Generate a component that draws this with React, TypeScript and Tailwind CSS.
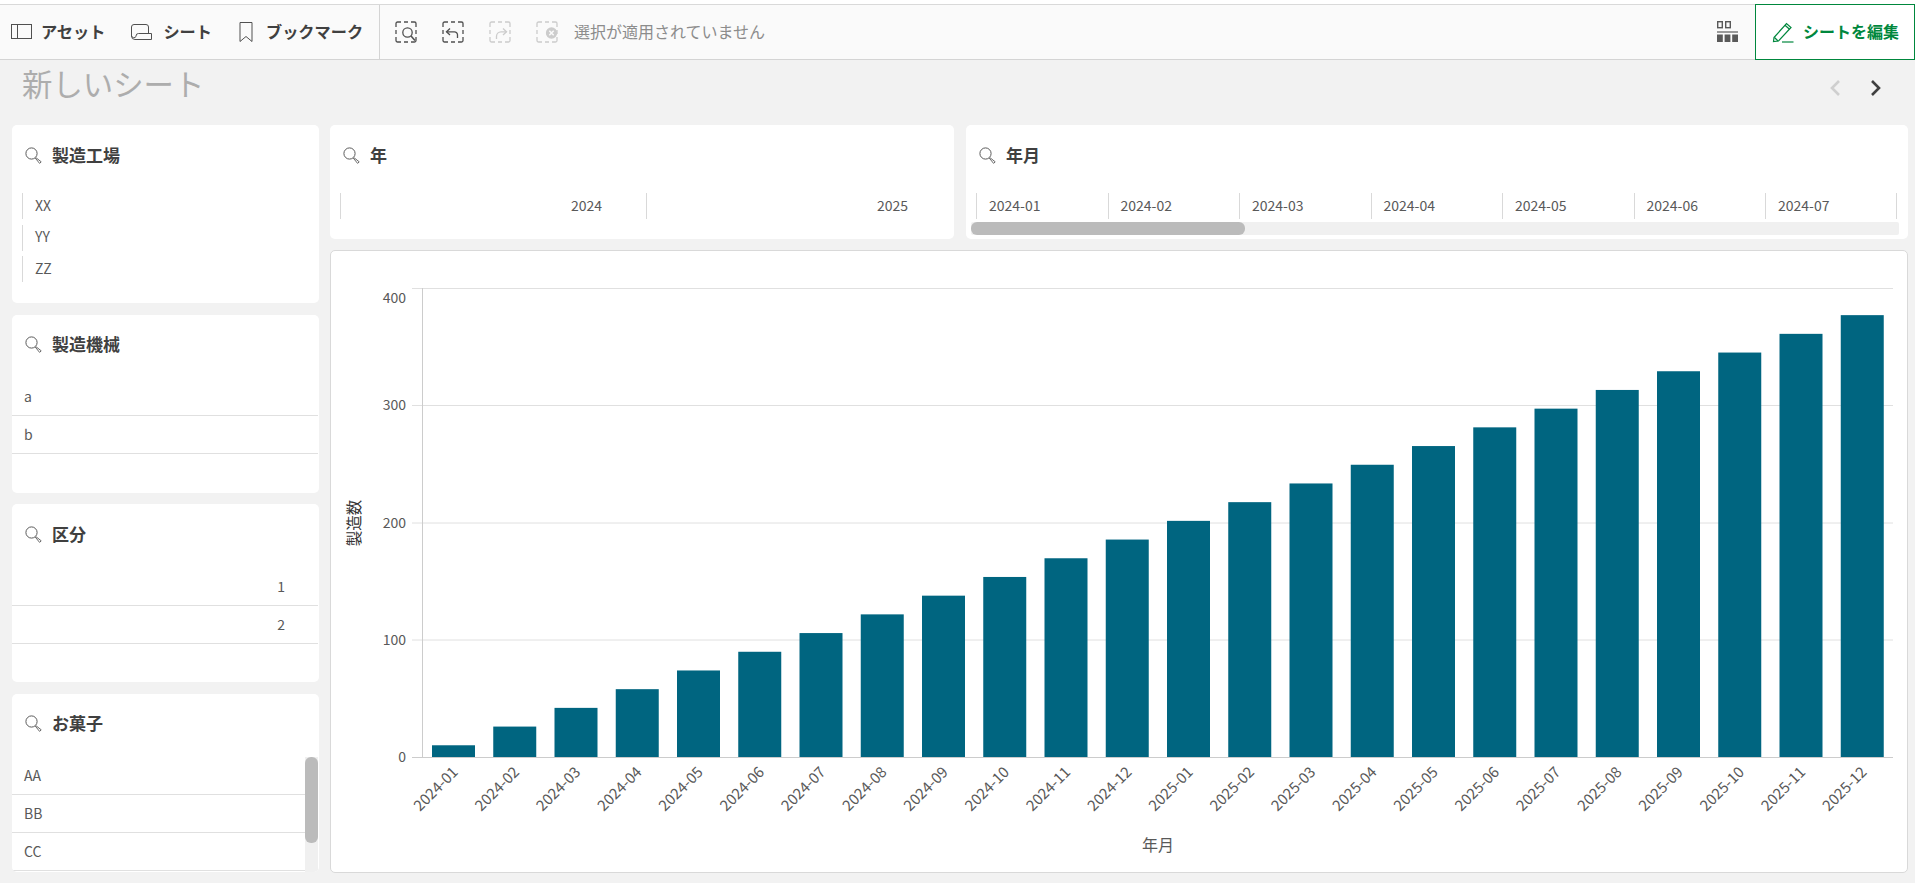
const FONT = "font-['Noto_Sans_CJK_JP','Noto_Sans',sans-serif]";

function SearchIcon() {
  return (
    <svg width="17" height="17" viewBox="0 0 17 17" fill="none" className="shrink-0">
      <circle cx="6.5" cy="6.5" r="5.6" stroke="#5a5a5a" strokeWidth="1" />
      <path d="M10.6 10.4 L16.2 14.8 L14.6 16.4 L10.2 11" stroke="#6a6a6a" strokeWidth="1" fill="#fff" />
    </svg>
  );
}

function Title({ text }: { text: string }) {
  return (
    <div className="flex items-center h-[60px] pl-[13px] shrink-0">
      <SearchIcon />
      <span className="ml-[10px] mb-[2px] text-[17px] font-bold text-[#404040] leading-none">{text}</span>
    </div>
  );
}

function Card({ children }: { children: React.ReactNode }) {
  return <div className="bg-white rounded-[5px] overflow-hidden flex flex-col min-h-0">{children}</div>;
}

function Row({ text, right }: { text: string; right?: boolean }) {
  return (
    <div
      className={`h-[38px] shrink-0 border-b border-[#e0e0e0] flex items-center text-[14px] text-[#595959] ${
        right ? "justify-end pr-[33px]" : "pl-[12px]"
      }`}
    >
      {text}
    </div>
  );
}

const months = [
  "2024-01","2024-02","2024-03","2024-04","2024-05","2024-06","2024-07","2024-08","2024-09","2024-10","2024-11","2024-12",
  "2025-01","2025-02","2025-03","2025-04","2025-05","2025-06","2025-07","2025-08","2025-09","2025-10","2025-11","2025-12",
];

function Chart() {
  const base = 757;
  const k = 469 / 400;
  return (
    <svg viewBox="331 251 1576 621" className="block w-full h-full" fontFamily="'Noto Sans CJK JP','Noto Sans',sans-serif">
      {[288.5, 405.5, 523, 640].map((y) => (
        <line key={y} x1="412" x2="1893" y1={y} y2={y} stroke="#e0e0e0" strokeWidth="1" />
      ))}
      <line x1="412" x2="1893" y1={base + 0.5} y2={base + 0.5} stroke="#cccccc" strokeWidth="1" />
      <line x1="422.5" x2="422.5" y1="288" y2={base} stroke="#cccccc" strokeWidth="1" />
      {months.map((m, i) => {
        const v = 10 + 15.95 * i;
        const x = 432 + 61.25 * i;
        const h = v * k;
        return <rect key={m} x={x} y={base - h} width="43" height={h} fill="#006580" />;
      })}
      {[
        ["400", 298],
        ["300", 405],
        ["200", 523],
        ["100", 640],
        ["0", 757],
      ].map(([t, y]) => (
        <text key={t} x="406" y={y} dy="0.36em" textAnchor="end" fontSize="14" fill="#595959">
          {t}
        </text>
      ))}
      {months.map((m, i) => {
        const cx = 459 + 61.25 * i;
        return (
          <text key={m} x={cx} y="773" textAnchor="end" fontSize="15" fill="#595959" transform={`rotate(-45 ${cx} 773)`}>
            {m}
          </text>
        );
      })}
      <text x="1158" y="851" textAnchor="middle" fontSize="16" fill="#595959">
        年月
      </text>
      <text x="0" y="0" textAnchor="middle" fontSize="15.5" fill="#333333" transform="translate(360 523) rotate(-90)">
        製造数
      </text>
    </svg>
  );
}

function ToolButton({ icon, label, className }: { icon: React.ReactNode; label: string; className: string }) {
  return (
    <div className={`flex items-center ${className}`}>
      {icon}
      <span className="mb-[2px] text-[16.2px] font-bold text-[#404040] leading-none">{label}</span>
    </div>
  );
}

function DashBox({ children, faded }: { children: React.ReactNode; faded?: boolean }) {
  return (
    <svg width="22" height="22" viewBox="0 0 22 22" fill="none" className="shrink-0">
      <g stroke={faded ? "#cccccc" : "#505050"} strokeWidth="1.3">
        <path d="M1 6V2.5A1.5 1.5 0 0 1 2.5 1H6M9 1h4M16 1h3.5A1.5 1.5 0 0 1 21 2.5V6M21 9v4M21 16v3.5a1.5 1.5 0 0 1-1.5 1.5H16M13 21H9M6 21H2.5A1.5 1.5 0 0 1 1 19.5V16M1 13V9" />
        {children}
      </g>
    </svg>
  );
}

export default function App() {
  return (
    <div className={`${FONT} w-[1915px] h-[883px] overflow-hidden bg-[#f2f2f2] flex flex-col`}>
      <div className="h-[5px] bg-white border-b border-[#d9d9d9] shrink-0" />
      <div className="h-[55px] bg-[#fafafa] border-b border-[#d4d4d4] flex items-stretch shrink-0">
        <div className="flex items-center pl-[11px] w-[380px] border-r border-[#d4d4d4] shrink-0">
          <ToolButton
            className="gap-[9px]"
            label="アセット"
            icon={
              <svg width="21" height="15" viewBox="0 0 21 15" fill="none" stroke="#505050">
                <rect x="0.5" y="0.5" width="20" height="14" />
                <path d="M6.5 0.5V14.5" />
              </svg>
            }
          />
          <ToolButton
            className="gap-[11px] ml-[26px]"
            label="シート"
            icon={
              <svg width="21" height="16" viewBox="0 0 21 16" fill="none" stroke="#505050">
                <path d="M0.5 12V3A2.5 2.5 0 0 1 3 0.5H15A2.5 2.5 0 0 1 17.5 3V9.5" />
                <path d="M20.5 9.5H7.5A2.5 2.5 0 0 0 5 12V12.5A2.5 2.5 0 0 1 0.5 12A3.5 3.5 0 0 0 4 15.5H20.5Z" />
              </svg>
            }
          />
          <ToolButton
            className="gap-[13px] ml-[27px]"
            label="ブックマーク"
            icon={
              <svg width="14" height="20" viewBox="0 0 14 20" fill="none" stroke="#505050">
                <path d="M1 0.5H13V19.5L7 14.5L1 19.5Z" />
              </svg>
            }
          />
        </div>
        <div className="flex items-center pl-[15px] flex-1">
          <div className="flex items-center gap-[25px]">
            <DashBox>
              <circle cx="12.5" cy="11.5" r="4.7" />
              <path d="M16 15L20 19.5" strokeWidth="1.6" />
            </DashBox>
            <DashBox>
              <path d="M8 7.5L4.5 10.8L8 14" />
              <path d="M4.5 10.8H12.5A3 3 0 0 1 15.5 13.8V17" />
            </DashBox>
            <DashBox faded>
              <path d="M14 7.5L17.5 10.8L14 14" />
              <path d="M17.5 10.8H12A4.5 4.5 0 0 0 7.5 15.3V18" />
            </DashBox>
            <DashBox faded>
              <circle cx="15.5" cy="12" r="5" fill="#cccccc" />
              <path d="M13.3 9.8l4.4 4.4M17.7 9.8l-4.4 4.4" stroke="#fafafa" strokeWidth="1.5" />
            </DashBox>
          </div>
          <span className="ml-[16px] mb-[2px] text-[16px] text-[#8c8c8c] leading-none">選択が適用されていません</span>
          <div className="ml-auto mr-[16px]">
            <svg width="22" height="22" viewBox="0 0 22 22">
              <g fill="none" stroke="#595959" strokeWidth="1.4">
                <rect x="0.7" y="0.7" width="4.6" height="6" />
                <rect x="8.7" y="0.7" width="4.6" height="6" />
              </g>
              <rect x="0" y="10" width="21" height="2" fill="#9a9a9a" />
              <g fill="#595959">
                <rect x="0" y="13.5" width="5.8" height="7.5" />
                <rect x="7.6" y="13.5" width="5.8" height="7.5" />
                <rect x="15.2" y="13.5" width="5.8" height="7.5" />
              </g>
            </svg>
          </div>
        </div>
        <div className="w-[160px] -mt-[1px] -mb-[1px] bg-white border border-[#00873d] flex items-center pl-[16px] gap-[9px] shrink-0">
          <svg width="22" height="22" viewBox="0 0 22 22" fill="none" stroke="#00873d" strokeWidth="1.2">
            <path d="M2 16.5L14.5 2.5L19 6.5L6.5 20L1.5 20.5Z" />
            <path d="M13 4.2L17.5 8.2" />
            <path d="M2.5 16.5L6 20" />
            <path d="M10 21H21.5" />
          </svg>
          <span className="mb-[2px] text-[16px] font-bold text-[#00873d] leading-none">シートを編集</span>
        </div>
      </div>

      <div className="h-[65px] shrink-0 flex items-start pl-[22px] pr-[32px]">
        <span className="text-[30.4px] text-[#adadad] leading-[46px] font-normal">新しいシート</span>
        <div className="ml-auto flex gap-[27px] mt-[19px]">
          <svg width="14" height="18" viewBox="0 0 14 18" fill="none" stroke="#cfcfcf" strokeWidth="2.6">
            <path d="M11 2L4 9L11 16" />
          </svg>
          <svg width="14" height="18" viewBox="0 0 14 18" fill="none" stroke="#404040" strokeWidth="2.6">
            <path d="M3 2L10 9L3 16" />
          </svg>
        </div>
      </div>

      <div className="flex pl-[12px] gap-[11px] h-[748px] shrink-0">
        <div className="w-[307px] h-[747px] grid grid-rows-4 gap-[11.3px] shrink-0">
          <Card>
            <Title text="製造工場" />
            <div className="flex flex-col gap-[5.5px] pl-[10px] pt-[8px] text-[14px] text-[#595959]">
              {["XX", "YY", "ZZ"].map((t) => (
                <div key={t} className="h-[26px] border-l border-[#d9d9d9] pl-[12px] pb-[2px] flex items-center">
                  {t}
                </div>
              ))}
            </div>
          </Card>
          <Card>
            <Title text="製造機械" />
            <div className="pt-[3px] mr-[1px]">
              <Row text="a" />
              <Row text="b" />
            </div>
          </Card>
          <Card>
            <Title text="区分" />
            <div className="pt-[4px] mr-[1px]">
              <Row text="1" right />
              <Row text="2" right />
            </div>
          </Card>
          <Card>
            <Title text="お菓子" />
            <div className="pt-[3px] flex flex-1 min-h-0">
              <div className="flex-1">
                <Row text="AA" />
                <Row text="BB" />
                <Row text="CC" />
              </div>
              <div className="w-[13px] mr-[1px] bg-[#f0f0f0] shrink-0">
                <div className="h-[86px] bg-[#bbbbbb] rounded-[6px]" />
              </div>
            </div>
          </Card>
        </div>

        <div className="w-[1578px] h-[748px] flex flex-col gap-[11px] shrink-0">
          <div className="flex gap-[12px] h-[114px] shrink-0">
            <div className="w-[624px] bg-white rounded-[5px] flex flex-col">
              <div className="flex items-center h-[60px] pl-[13px]">
                <SearchIcon />
                <span className="ml-[10px] mb-[2px] text-[17px] font-bold text-[#404040] leading-none">年</span>
              </div>
              <div className="flex pl-[10px] pt-[8px] text-[14px] text-[#595959]">
                {["2024", "2025"].map((t) => (
                  <div key={t} className="w-[306px] h-[26px] border-l border-[#d9d9d9] flex items-center justify-end pr-[44px] pb-[2px]">
                    {t}
                  </div>
                ))}
              </div>
            </div>
            <div className="w-[942px] bg-white rounded-[5px] flex flex-col">
              <div className="flex items-center h-[60px] pl-[13px]">
                <SearchIcon />
                <span className="ml-[10px] mb-[2px] text-[17px] font-bold text-[#404040] leading-none">年月</span>
              </div>
              <div className="flex pl-[10px] pt-[8px] text-[14px] text-[#595959] h-[37px]">
                {months.slice(0, 7).map((t) => (
                  <div key={t} className="w-[131.5px] h-[26px] border-l border-[#d9d9d9] flex items-center pl-[12px] pb-[2px] last:border-r last:w-[132px]">
                    {t}
                  </div>
                ))}
              </div>
              <div className="ml-[5px] w-[928px] h-[13px] bg-[#f0f0f0] rounded-[2px]">
                <div className="w-[274px] h-[13px] bg-[#bbbbbb] rounded-[6px]" />
              </div>
            </div>
          </div>
          <div className="flex-1 min-h-0 bg-white border border-[#d9d9d9] rounded-[5px] overflow-hidden">
            <Chart />
          </div>
        </div>
      </div>
    </div>
  );
}
